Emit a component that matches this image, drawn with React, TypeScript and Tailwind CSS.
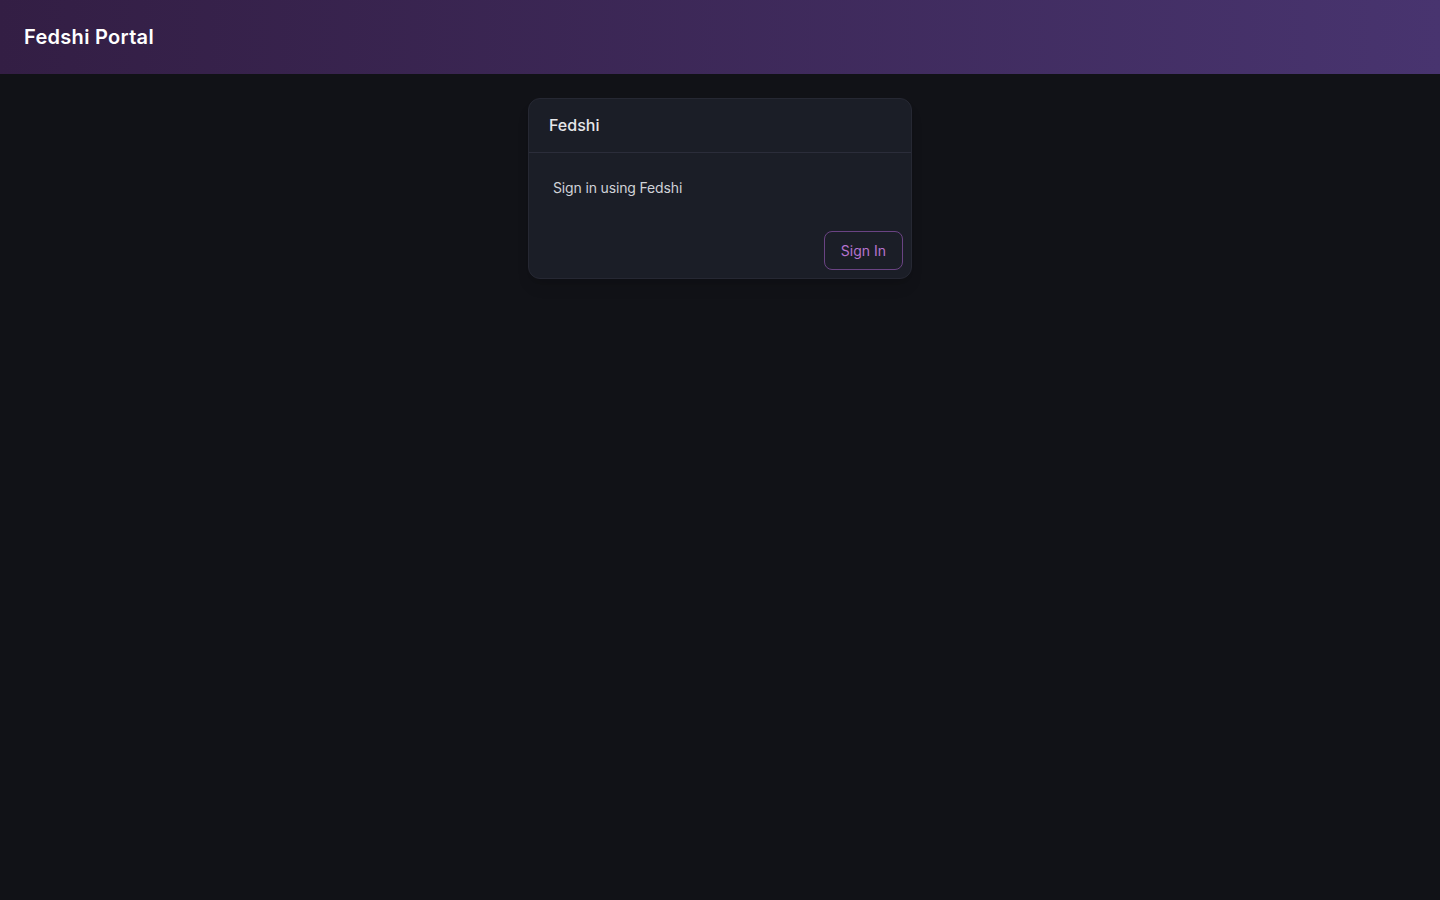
export default function App() {
  return (
    <div className="min-h-screen bg-[#111217] font-['Inter',sans-serif] text-gray-200">
      {/* Top bar */}
      <header className="h-[74px] flex items-center px-6 bg-gradient-to-r from-[#331e44] to-[#48346f]">
        <h1 className="text-xl font-semibold text-white tracking-[0.3px]">Fedshi Portal</h1>
      </header>

      <main className="flex justify-center pt-6">
        <div className="w-96 rounded-xl border border-[#262833] bg-[#1b1e27] shadow-lg">
          <div className="px-5 py-4 border-b border-[#2b2d3a]">
            <h2 className="text-base font-medium text-[#e6e7ea] leading-[21px]">Fedshi</h2>
          </div>
          <div className="px-6 pt-[25px] pb-[25px]">
            <p className="text-sm text-[#d0d2d8] tracking-[-0.15px]">Sign in using Fedshi</p>
          </div>
          <div className="flex justify-end px-2 pt-2 pb-2">
            <button className="h-[39px] px-4 rounded-lg border border-[#6a4383] text-sm text-[#b673cf] hover:bg-[#b673cf]/10">
              Sign In
            </button>
          </div>
        </div>
      </main>
    </div>
  );
}
